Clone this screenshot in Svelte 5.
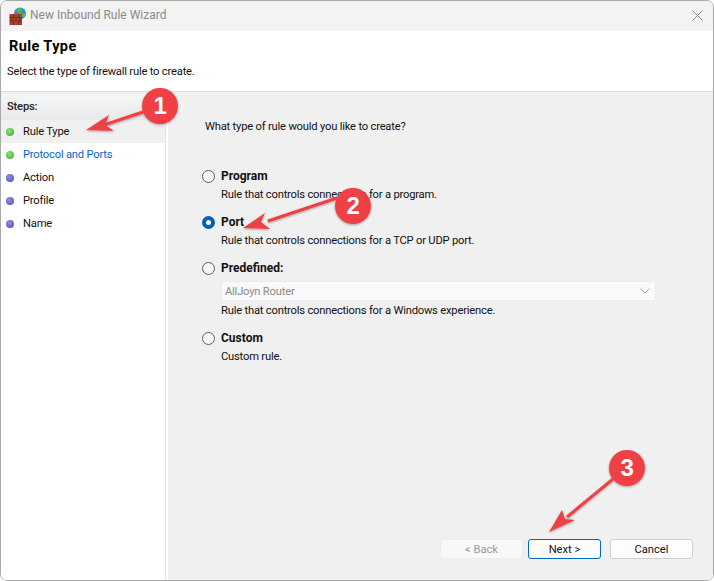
<script>
  const steps = [
    { name: "Rule Type", done: true, selected: true },
    { name: "Protocol and Ports", done: true, link: true },
    { name: "Action" },
    { name: "Profile" },
    { name: "Name" },
  ];

  const options = [
    { label: "Program", desc: "Rule that controls connections for a program." },
    { label: "Port", desc: "Rule that controls connections for a TCP or UDP port.", checked: true },
    { label: "Predefined:", desc: "Rule that controls connections for a Windows experience.", select: "AllJoyn Router" },
    { label: "Custom", desc: "Custom rule." },
  ];

  // annotation arrows: badge centre + arrow tip
  const badges = [
    { n: 1, cx: 160, cy: 106, line: "M143 112 L104 125", head: "M86 130 L109 115 L105 125 L114 131 Z" },
    { n: 2, cx: 353, cy: 206, line: "M337 198 L268 221", head: "M243 228 L265 213 L261 222 L270 229 Z" },
    { n: 3, cx: 627, cy: 468, line: "M613 479 L567 517", head: "M549 532 L562 510 L565 519 L575 520 Z" },
  ];
</script>

<div class="window">
  <div class="titlebar">
    <svg class="appicon" width="18" height="18" viewBox="0 0 18 18">
      <circle cx="11" cy="6.5" r="6" fill="#2f8fd8" />
      <path d="M7.5 2.5 Q10.5 0 13 2 L12 7 L9 6 Z" fill="#5cb548" />
      <path d="M13 7 L16.5 5.5 L15.5 10 L13 10 Z" fill="#5cb548" />
      <rect x="0.5" y="7" width="12.5" height="11" fill="#a8432f" />
      <path d="M0.5 10.5 H13 M0.5 14 H13 M4.5 7 V10.5 M9.5 7 V10.5 M2.5 10.5 V14 M7 10.5 V14 M11 10.5 V14 M4.5 14 V18 M9.5 14 V18" stroke="#6b2a1e" stroke-width="0.8" fill="none" />
    </svg>
    <span class="title">New Inbound Rule Wizard</span>
    <svg class="close" width="11" height="11" viewBox="0 0 11 11">
      <path d="M0.5 0.5 L10.5 10.5 M10.5 0.5 L0.5 10.5" stroke="#8a8a8a" stroke-width="1" fill="none" />
    </svg>
  </div>

  <div class="header">
    <h1>Rule Type</h1>
    <p>Select the type of firewall rule to create.</p>
  </div>

  <div class="main">
    <div class="sidebar">
      <div class="steps-head">Steps:</div>
      {#each steps as s}
        <div class="step" class:selected={s.selected}>
          <span class="dot" class:done={s.done}></span>
          <span class:link={s.link}>{s.name}</span>
        </div>
      {/each}
    </div>

    <div class="content">
      <div class="question">What type of rule would you like to create?</div>

      <div class="options">
        {#each options as o}
          <div class="option">
            <div class="radio-row">
              <span class="radio" class:checked={o.checked}></span>
              <span class="label">{o.label}</span>
            </div>
            {#if o.select}
              <div class="select">
                <span>{o.select}</span>
                <svg width="10" height="6" viewBox="0 0 10 6">
                  <path d="M0.5 0.5 L5 5 L9.5 0.5" stroke="#a8a8a8" fill="none" />
                </svg>
              </div>
            {/if}
            <div class="desc">{o.desc}</div>
          </div>
        {/each}
      </div>

      <div class="buttons">
        <button class="disabled" disabled>&lt; Back</button>
        <button class="primary">Next &gt;</button>
        <button class="cancel">Cancel</button>
      </div>
    </div>
  </div>

  <svg class="annotations" width="714" height="581" viewBox="0 0 714 581">
    <defs>
      <filter id="shadow" x="-30%" y="-30%" width="160%" height="160%">
        <feDropShadow dx="0" dy="1" stdDeviation="1.2" flood-color="#000" flood-opacity="0.35" />
      </filter>
    </defs>
    {#each badges as b}
      <g filter="url(#shadow)">
        <path d={b.line} stroke="#ef4044" stroke-width="3" fill="none" />
        <path d={b.head} fill="#ef4044" />
        <circle cx={b.cx} cy={b.cy} r="18" fill="#ef4044" />
      </g>
      <text x={b.cx} y={b.cy + 8} text-anchor="middle">{b.n}</text>
    {/each}
  </svg>
</div>

<style>
  :global(body) {
    margin: 0;
    background: #fff;
  }
  .window {
    position: relative;
    width: 714px;
    height: 581px;
    box-sizing: border-box;
    display: flex;
    flex-direction: column;
    overflow: hidden;
    background: #f0f0f0;
    border: 1px solid #a9a9a9;
    border-radius: 7px;
    font-family: Roboto, "Noto Sans", sans-serif;
    font-size: 11.2px;
    letter-spacing: -0.2px;
    color: #111;
  }
  .titlebar {
    height: 30px;
    flex: none;
    display: flex;
    align-items: center;
    gap: 3px;
    padding: 0 10px 0 8px;
    background: #f3f3f3;
  }
  .appicon {
    margin-top: -1px;
  }
  .title {
    color: #8b8b8b;
    font-size: 12px;
    letter-spacing: 0;
    flex: 1;
    margin-top: -3px;
  }
  .close {
    margin-top: -2px;
  }
  .header {
    height: 61px;
    flex: none;
    box-sizing: border-box;
    background: #fff;
    padding: 5px 0 0 6px;
    border-bottom: 1px solid #dedede;
  }
  h1 {
    margin: 0 0 0 2px;
    font-size: 14.5px;
    letter-spacing: 0.4px;
    font-weight: 700;
    line-height: 22px;
    color: #000;
  }
  .header p {
    margin: 5px 0 0;
    line-height: 18px;
    color: #111;
  }
  .main {
    flex: 1;
    display: flex;
    min-height: 0;
    margin-top: 2px;
    background: #fff;
  }
  .sidebar {
    width: 164px;
    flex: none;
    background: #fff;
    border-right: 1px solid #e4e4e4;
  }
  .steps-head {
    height: 26px;
    box-sizing: border-box;
    padding: 4px 0 0 6px;
    line-height: 18px;
    font-weight: 500;
    color: #222;
    background: linear-gradient(#f6f6f6, #e9e9e9);
  }
  .step {
    height: 23px;
    display: flex;
    align-items: center;
    gap: 9px;
    padding-left: 5px;
  }
  .step.selected {
    background: #f0f0f0;
  }
  .dot {
    width: 8px;
    height: 8px;
    border-radius: 50%;
    background: radial-gradient(circle at 40% 35%, #8f8fe4, #4d4bb4);
  }
  .dot.done {
    background: radial-gradient(circle at 40% 35%, #93e080, #3aa52f);
  }
  .link {
    color: #0a66c8;
  }
  .content {
    flex: 1;
    margin-left: 2px;
    display: flex;
    flex-direction: column;
    background: #f0f0f0;
    padding-left: 37px;
  }
  .question {
    margin-top: 24px;
    line-height: 18px;
  }
  .options {
    margin-top: 30px;
    display: flex;
    flex-direction: column;
    gap: 9px;
  }
  .option {
    display: flex;
    flex-direction: column;
  }
  .radio-row {
    display: flex;
    align-items: center;
    gap: 6px;
    height: 20px;
    margin-left: -3px;
  }
  .radio {
    width: 13px;
    height: 13px;
    box-sizing: border-box;
    flex: none;
    border: 1px solid #5e5e5e;
    border-radius: 50%;
    background: #f7f7f7;
  }
  .radio.checked {
    border: 4px solid #0060b8;
    background: #fff;
  }
  .label {
    font-weight: 700;
    font-size: 12px;
    letter-spacing: 0;
    color: #111;
  }
  .desc {
    margin-left: 16px;
    line-height: 17px;
    color: #111;
  }
  .select {
    margin: 3px 0 1px 16px;
    width: 435px;
    height: 20px;
    box-sizing: border-box;
    display: flex;
    align-items: center;
    justify-content: space-between;
    padding: 0 5px 0 3px;
    background: #fafafa;
    border: 1px solid #ececec;
    border-radius: 2px;
    color: #8a8a8a;
  }
  .buttons {
    margin-top: auto;
    margin-bottom: 21px;
    align-self: flex-end;
    margin-right: 20px;
    display: flex;
    gap: 0;
  }
  button {
    height: 20px;
    box-sizing: border-box;
    font: inherit;
    padding: 0;
    border-radius: 3px;
    background: #fdfdfd;
    color: #111;
    border: 1px solid #cfcfcf;
  }
  .disabled {
    width: 83px;
    background: #f8f8f8;
    color: #9a9a9a;
    border-color: #ececec;
    margin-right: 5px;
  }
  .primary {
    width: 73px;
    border-color: #0067c0;
    margin-right: 9px;
  }
  .cancel {
    width: 83px;
  }
  .annotations {
    position: absolute;
    left: -1px;
    top: -1px;
    pointer-events: none;
  }
  .annotations text {
    font-family: "Liberation Sans", sans-serif;
    font-size: 24px;
    font-weight: 700;
    fill: #fff;
  }
</style>
